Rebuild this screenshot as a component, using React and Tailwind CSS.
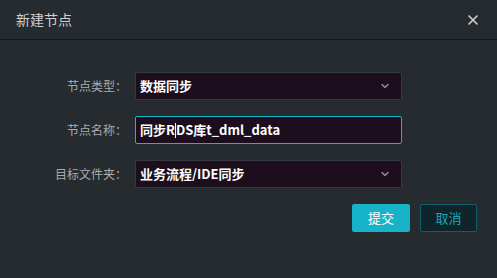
import React from "react";
import { ChevronDown, X } from "lucide-react";

const font = { fontFamily: '"Noto Sans CJK SC", "Noto Sans", sans-serif' };

const Row = ({ label, children }) => (
  <div className="flex items-center h-[28px]">
    <div className="w-[135px] pr-[8px] text-right text-[12px] text-[#a9abad]">{label}</div>
    {children}
  </div>
);

const SelectBox = ({ value }) => (
  <div className="w-[267px] h-[28px] flex items-center justify-between bg-[#1c0e1c] border border-[#353840] rounded-[2px] pl-[4px] pr-[10px]">
    <span className="text-[13px] font-semibold text-white">{value}</span>
    <ChevronDown className="w-[12px] h-[12px] text-[#8a8c90]" strokeWidth={3} />
  </div>
);

export default function App() {
  return (
    <div className="w-[497px] h-[278px] bg-[#262b30] overflow-hidden" style={font}>
      {/* 标题栏 */}
      <div className="h-[40px] flex items-center justify-between pl-[16px] pr-[16px] border-b border-[#16191c]">
        <span className="text-[14px] text-[#cfd0d2]">新建节点</span>
        <X className="w-[16px] h-[16px] text-[#d0d0d0]" strokeWidth={2.5} />
      </div>

      {/* 表单 */}
      <div className="flex flex-col gap-[16px] pt-[32px]">
        <Row label="节点类型：">
          <SelectBox value="数据同步" />
        </Row>
        <Row label="节点名称：">
          <div className="w-[267px] h-[28px] flex items-center bg-[#1c0e1c] border border-[#16b6cc] rounded-[2px] pl-[4px]">
            <span className="text-[13px] font-semibold text-white">同步R</span>
            <span className="w-px h-[15px] bg-white"></span>
            <span className="text-[13px] font-semibold text-white">DS库t_dml_data</span>
          </div>
        </Row>
        <Row label="目标文件夹：">
          <SelectBox value="业务流程/IDE同步" />
        </Row>
      </div>

      {/* 按钮 */}
      <div className="flex justify-end gap-[10px] pr-[20px] pt-[16px]">
        <button className="w-[58px] h-[28px] bg-[#17b3c8] rounded-[2px] text-[13px] text-white">提交</button>
        <button className="w-[57px] h-[28px] bg-[#0f242b] border border-[#0e5f69] rounded-[2px] text-[13px] text-[#1aa7b8]">取消</button>
      </div>
    </div>
  );
}
